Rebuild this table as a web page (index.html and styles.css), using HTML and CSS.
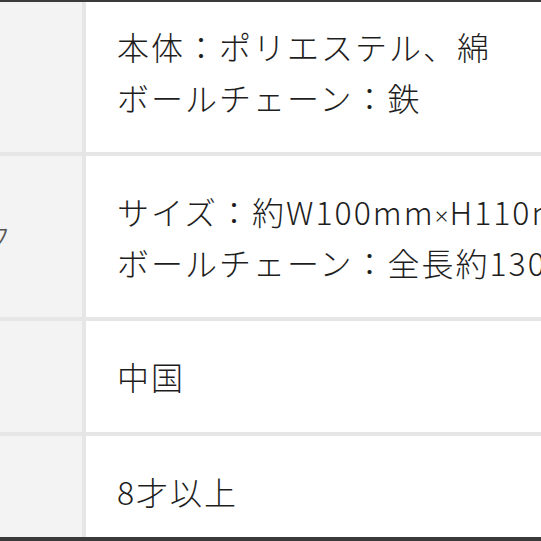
FILE: index.html
```html
<!DOCTYPE html>
<html lang="ja">
<head>
<meta charset="utf-8">
<link rel="stylesheet" href="styles.css">
</head>
<body>
<div class="frame">
  <div class="spec">
    <div class="label">素材</div>
    <div class="value">本体：ポリエステル、綿<br>ボールチェーン：鉄</div>
    <div class="label">スペック</div>
    <div class="value">サイズ：約W100mm<span class="times">×</span>H110mm<br>ボールチェーン：全長約130mm</div>
    <div class="label">原産国</div>
    <div class="value">中国</div>
    <div class="label">年齢</div>
    <div class="value">8才以上</div>
  </div>
</div>
</body>
</html>
```
FILE: styles.css
```css
html, body {
  margin: 0;
  padding: 0;
  background: #ffffff;
}
.frame {
  width: 541px;
  height: 541px;
  box-sizing: border-box;
  border-top: 2px solid #3a3a3a;
  border-bottom: 4px solid #3a3a3a;
  overflow: hidden;
}
.spec {
  display: grid;
  grid-template-columns: 233px 700px;
  gap: 4px;
  background: #e6e6e6;
  margin-top: -11px;
  margin-left: -151px;
  width: 937px;
  font-family: "Noto Sans CJK JP", "Noto Sans", sans-serif;
  font-weight: 300;
  font-size: 32px;
  letter-spacing: 2px;
  line-height: 50.5px;
  color: #1e1e1e;
}
.label {
  background: #f3f3f3;
  padding: 30px 31px;
  display: flex;
  align-items: center;
  white-space: nowrap;
  color: #555;
}
.value {
  background: #ffffff;
  padding: 30px 31px;
  white-space: nowrap;
}
.times {
  font-family: "Noto Sans", sans-serif;
  font-size: 24px;
  line-height: 0;
  letter-spacing: 1px;
}
```
